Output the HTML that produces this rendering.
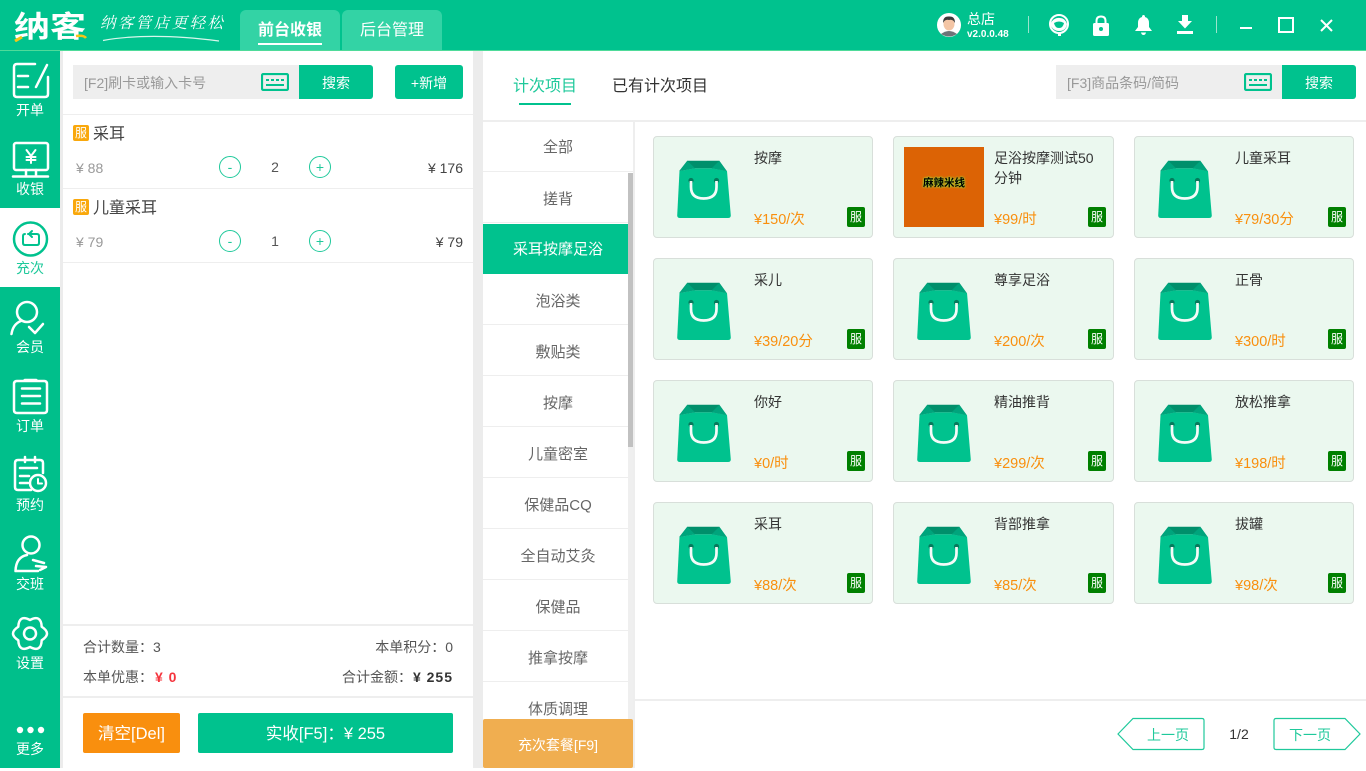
<!DOCTYPE html>
<html lang="zh"><head><meta charset="utf-8"><title>纳客</title>
<style>
*{box-sizing:border-box}
html,body{margin:0;padding:0;width:1366px;height:768px;overflow:hidden;background:#fff;font-family:"Liberation Sans","Noto Sans CJK SC",sans-serif;color:#333}
.a{position:absolute}
.t{position:absolute;white-space:nowrap;line-height:20px;font-size:14px}
.c{text-align:center}
.g{background:#00c28e}
.lab{position:absolute;left:0;width:60px;text-align:center;color:#fff;font-size:14px;line-height:18px}
.cat{position:absolute;left:483px;width:150px;height:50px;line-height:54px;text-align:center;font-size:15px;color:#666;border-bottom:1px solid #eee}
.card{position:absolute;width:220px;height:102px;background:#ebf8ef;border:1px solid #d8dfda;border-radius:4px}
.card svg{position:absolute;left:23px;top:23px}
.card .n{position:absolute;left:100px;top:11px;width:105px;font-size:14px;line-height:20px;color:#333}
.card .p{position:absolute;left:100px;top:73px;font-size:14.500px;line-height:21px;color:#f98f0e;white-space:nowrap}
.card .b{position:absolute;left:193px;top:70px;width:18px;height:20px;background:#008000;color:#fff;font-size:12px;line-height:20px;text-align:center;border-radius:2px}
.fu{position:absolute;left:73px;width:16px;height:16px;background:#f9a80c;border-radius:2px;color:#fff;font-size:12px;line-height:16px;text-align:center}
.rd{position:absolute;width:22px;height:22px;border:1px solid #1fc99b;border-radius:50%;color:#1fc99b;font-size:14px;line-height:21px;text-align:center}
</style></head><body>
<svg width="0" height="0" style="position:absolute"><defs>
<symbol id="bag" viewBox="0 0 54 58"><path d="M2.500 11 L18 8.300 H34.700 L50 11 L53.800 55.500 Q53.800 58 51 58 H3 Q0.200 58 0.200 55.500 Z" fill="#00c28e"/><path d="M10.300 0.700 H42.300 L49.700 11 L34.700 8.300 H18 L2.300 11 Z" fill="#008f6b"/><path d="M10.300 0.700 L18 8.300 L2.300 11 Z M42.300 0.700 L34.700 8.300 L49.700 11 Z" fill="#00a47c"/><circle cx="14" cy="20.500" r="2.600" fill="#057a5c"/><circle cx="39.500" cy="20.500" r="2.600" fill="#057a5c"/><path d="M14 21 V27 Q14 38.500 26.700 38.500 Q39.500 38.500 39.500 27 V21" fill="none" stroke="#f4fbf8" stroke-width="2.700"/></symbol>
<symbol id="kb" viewBox="0 0 28 18"><rect x="1" y="1" width="26" height="16" rx="1.500" fill="none" stroke="#00c28e" stroke-width="2.200"/><path d="M5 7H8M10 7H13M15 7H18M20 7H23M5 12H23" stroke="#00c28e" stroke-width="2" fill="none"/></symbol>
</defs></svg>

<!-- header -->
<div class="a g" style="left:0;top:0;width:1366px;height:50px"></div>
<div class="a" style="left:0;top:50px;width:1366px;height:1px;background:#4fdb9a"></div>
<div class="t" style="left:14px;top:9px;font-size:36px;line-height:36px;font-weight:700;color:#fff;letter-spacing:0;transform:scaleY(.82);transform-origin:50% 50%">纳客</div>
<svg class="a" style="left:14px;top:34px" width="74" height="8"><path d="M1 7 L8 3" stroke="#f5c518" stroke-width="3"/><path d="M62 2 Q70 1 72 4" stroke="#f5c518" stroke-width="2.500" fill="none"/></svg>
<div class="t" style="left:100px;top:14px;font-family:'Liberation Serif','Noto Serif CJK SC',serif;font-style:italic;font-size:15.500px;line-height:20px;color:#fff;letter-spacing:2.400px">纳客管店更轻松</div>
<svg class="a" style="left:100px;top:33px" width="125" height="10"><path d="M3 7.500 Q50 -1 119 8" fill="none" stroke="#d8f7ec" stroke-width="1.200"/></svg>
<div class="a" style="left:240px;top:10px;width:100px;height:40px;background:#33d3a5;border-radius:6px 6px 0 0"></div>
<div class="a" style="left:342px;top:10px;width:100px;height:40px;background:#33d3a5;border-radius:6px 6px 0 0"></div>
<div class="t c" style="left:240px;top:21px;width:100px;font-size:16px;font-weight:700;color:#fff">前台收银</div>
<div class="a" style="left:258px;top:43px;width:64px;height:2px;background:#fff"></div>
<div class="t c" style="left:342px;top:21px;width:100px;font-size:16px;color:#fff">后台管理</div>

<svg class="a" style="left:937px;top:13px" width="24" height="24" viewBox="0 0 24 24"><circle cx="12" cy="12" r="12" fill="#fff"/><path d="M4 21 Q12 15 20 21 Q12 26 4 21Z" fill="#6d7378"/><ellipse cx="12" cy="11" rx="5.500" ry="6.500" fill="#f3c5a5"/><path d="M6 10 Q6 3 12 3.500 Q18 3 18 10 Q16 6 12 7 Q8 6 6 10Z" fill="#3b3b3b"/></svg>
<div class="t" style="left:967px;top:9px;font-size:14px;color:#fff">总店</div>
<div class="t" style="left:967px;top:25px;font-size:10px;font-weight:700;color:#fff">v2.0.0.48</div>
<div class="a" style="left:1028px;top:16px;width:1px;height:17px;background:#9be4cd"></div>
<div class="a" style="left:1216px;top:16px;width:1px;height:17px;background:#9be4cd"></div>
<svg class="a" style="left:1048px;top:13px" width="22" height="26" viewBox="0 0 22 26"><circle cx="11" cy="11" r="9" fill="none" stroke="#fff" stroke-width="2"/><path d="M2 11 Q6 4 12 5 Q17 5 19 11 Q18 18 11 18 Q5 18 2 11Z" fill="#fff"/><path d="M6 10 Q11 7 16 10 Q15 15 11 15 Q7 15 6 10Z" fill="#00c28e"/><path d="M10 20 h3 v3 h-3z" fill="#fff"/></svg>
<svg class="a" style="left:1093px;top:15px" width="16" height="21" viewBox="0 0 16 21"><path d="M3.500 9 V6 Q3.500 1.500 8 1.500 Q12.500 1.500 12.500 6 V9" fill="none" stroke="#fff" stroke-width="2"/><rect y="8" width="16" height="13" rx="1.500" fill="#fff"/><circle cx="8" cy="14" r="2" fill="#00c28e"/></svg>
<svg class="a" style="left:1135px;top:15px" width="17" height="20" viewBox="0 0 17 20"><path d="M8.500 0 Q10 0 10 2 Q14 3 14 8 V12 L17 16 H0 L3 12 V8 Q3 3 7 2 Q7 0 8.500 0Z" fill="#fff"/><path d="M6 17.500 H11 Q10.500 20 8.500 20 Q6.500 20 6 17.500Z" fill="#fff"/></svg>
<svg class="a" style="left:1177px;top:15px" width="16" height="20" viewBox="0 0 16 20"><path d="M5 0 H11 V6 H15 L8 13.500 L1 6 H5Z" fill="#fff"/><rect y="16" width="16" height="3" fill="#fff"/></svg>
<div class="a" style="left:1240px;top:27px;width:12px;height:2px;background:#fff"></div>
<div class="a" style="left:1278px;top:17px;width:16px;height:16px;border:2px solid #fff"></div>
<svg class="a" style="left:1320px;top:19px" width="13" height="13"><path d="M1 1 L12 12 M12 1 L1 12" stroke="#fff" stroke-width="2"/></svg>

<!-- sidebar -->
<div class="a" style="left:0;top:51px;width:60px;height:717px;background:#00bf8b"></div>
<div class="a" style="left:60px;top:51px;width:3px;height:717px;background:#ececec"></div>
<div class="a" style="left:0;top:208px;width:60px;height:79px;background:#fff"></div>
<svg class="a" style="left:0;top:0" width="60" height="768" fill="none" stroke="#fff" stroke-width="2.500" stroke-linecap="round" stroke-linejoin="round">
<path d="M35 64 H17 Q14 64 14 67 V94 Q14 97 17 97 H45 Q48 97 48 94 V77 M18 76 H28 M18 87 H28 M47 65 L36 87"/>
<rect x="14" y="143" width="34" height="27" rx="2"/><path d="M13 176.500 H48 M26 170 V176 M36 170 V176"/>
<path d="M26.500 150 L31 156 L35.500 150 M31 156 V163 M26.500 157 H35.500 M26.500 160 H35.500" stroke-width="2"/>
<circle cx="30.500" cy="239" r="16.500" stroke="#00c28e"/><path d="M28 234 H37 Q39 234 39 236 V243 Q39 245 37 245 H25 Q23 245 23 243 V236 Q23 234 25 234 M32 231 L29 234 L32 237" stroke="#00c28e" stroke-width="2"/>
<circle cx="27" cy="312" r="10"/><path d="M11.500 334 Q13 324 21 321 M29 327 L35 333 L43 324"/>
<path d="M24 381 H17 Q14 381 14 384 V410 Q14 413 17 413 H44 Q47 413 47 410 V384 Q47 381 44 381 H37"/><path d="M25 380.500 H36" stroke-width="3.500"/><path d="M22 388.500 H40 M22 396 H40 M22 403.500 H40"/>
<path d="M31 490 H18 Q15 490 15 487 V463 Q15 460 18 460 H40 Q43 460 43 463 V473 M25 457 V462 M35 457 V462 M20 468 H37 M20 476 H29 M20 483 H28"/><circle cx="38" cy="483" r="8"/><path d="M38 479 V483.500 H42" stroke-width="2"/>
<circle cx="31" cy="545" r="8.500"/><path d="M15.500 571 Q16 557 27 555 M15.500 571 H38 M33 560 L44 563 M36 566 L46 567 L40 570"/>
<path d="M30 620 Q41.150 614.200 41.700 626.750 Q52.300 633.500 41.700 640.250 Q41.150 652.800 30 647 Q18.850 652.800 18.300 640.250 Q7.700 633.500 18.300 626.750 Q18.850 614.200 30 620Z"/><circle cx="30" cy="633.500" r="6"/>
<circle cx="20" cy="730" r="3.200" fill="#fff" stroke="none"/><circle cx="30.500" cy="730" r="3.200" fill="#fff" stroke="none"/><circle cx="41" cy="730" r="3.200" fill="#fff" stroke="none"/>
</svg>
<div class="lab" style="top:101px">开单</div>
<div class="lab" style="top:180px">收银</div>
<div class="lab" style="top:259px;color:#1fc99b">充次</div>
<div class="lab" style="top:338px">会员</div>
<div class="lab" style="top:417px">订单</div>
<div class="lab" style="top:496px">预约</div>
<div class="lab" style="top:575px">交班</div>
<div class="lab" style="top:654px">设置</div>
<div class="lab" style="top:740px">更多</div>

<!-- left panel -->
<div class="a" style="left:73px;top:65px;width:226px;height:34px;background:#eee"></div>
<div class="t" style="left:84px;top:73px;font-size:14px;color:#999">[F2]刷卡或输入卡号</div>
<svg class="a" style="left:261px;top:73px" width="28" height="18"><use href="#kb"/></svg>
<div class="a g c" style="left:299px;top:65px;width:74px;height:34px;line-height:37px;color:#fff;font-size:14px;border-radius:0 3px 3px 0">搜索</div>
<div class="a g c" style="left:395px;top:65px;width:68px;height:34px;line-height:37px;color:#fff;font-size:14px;border-radius:3px">+新增</div>
<div class="a" style="left:63px;top:114px;width:410px;height:1px;background:#eee"></div>
<div class="a" style="left:63px;top:188px;width:410px;height:1px;background:#eee"></div>
<div class="a" style="left:63px;top:262px;width:410px;height:1px;background:#eee"></div>
<div class="fu" style="top:125px">服</div>
<div class="t" style="left:93px;top:125px;font-size:16px;color:#444">采耳</div>
<div class="t" style="left:76px;top:158px;color:#999">¥ 88</div>
<div class="rd" style="left:219px;top:156px">-</div>
<div class="t c" style="left:265px;top:157px;width:20px;color:#555">2</div>
<div class="rd" style="left:309px;top:156px">+</div>
<div class="t" style="right:903px;top:158px;color:#444">¥ 176</div>
<div class="fu" style="top:199px">服</div>
<div class="t" style="left:93px;top:199px;font-size:16px;color:#444">儿童采耳</div>
<div class="t" style="left:76px;top:232px;color:#999">¥ 79</div>
<div class="rd" style="left:219px;top:230px">-</div>
<div class="t c" style="left:265px;top:231px;width:20px;color:#555">1</div>
<div class="rd" style="left:309px;top:230px">+</div>
<div class="t" style="right:903px;top:232px;color:#444">¥ 79</div>

<div class="a" style="left:63px;top:624px;width:410px;height:2px;background:#eee"></div>
<div class="a" style="left:63px;top:696px;width:410px;height:2px;background:#eee"></div>
<div class="t" style="left:83px;top:637px;font-size:14px;color:#555">合计数量：3</div>
<div class="t" style="right:913px;top:637px;font-size:14px;color:#555">本单积分：0</div>
<div class="t" style="left:83px;top:667px;font-size:14px;color:#555">本单优惠：</div>
<div class="t" style="left:155px;top:667px;font-size:14px;font-weight:700;color:#f5343d;letter-spacing:1px">¥ 0</div>
<div class="t" style="left:342px;top:667px;font-size:14px;color:#555">合计金额：</div>
<div class="t" style="right:913px;top:667px;font-size:14px;font-weight:700;color:#333;letter-spacing:1px">¥ 255</div>
<div class="a c" style="left:83px;top:713px;width:97px;height:40px;line-height:42px;background:#f98f0e;color:#fff;font-size:16.500px;border-radius:2px">清空[Del]</div>
<div class="a g c" style="left:198px;top:713px;width:255px;height:40px;line-height:42px;color:#fff;font-size:16.500px;border-radius:2px">实收[F5]：¥ 255</div>

<!-- divider -->
<div class="a" style="left:473px;top:51px;width:10px;height:717px;background:#ececec"></div>

<!-- top tabs -->
<div class="t" style="left:513px;top:77px;font-size:16px;color:#1fc99b">计次项目</div>
<div class="a" style="left:519px;top:103px;width:52px;height:2px;background:#00c28e"></div>
<div class="t" style="left:612px;top:77px;font-size:16px;color:#333">已有计次项目</div>
<div class="a" style="left:1056px;top:65px;width:226px;height:34px;background:#eee"></div>
<div class="t" style="left:1067px;top:73px;font-size:14px;color:#999">[F3]商品条码/简码</div>
<svg class="a" style="left:1244px;top:73px" width="28" height="18"><use href="#kb"/></svg>
<div class="a g c" style="left:1282px;top:65px;width:74px;height:34px;line-height:37px;color:#fff;font-size:14px;border-radius:0 3px 3px 0">搜索</div>
<div class="a" style="left:483px;top:120px;width:883px;height:2px;background:#eee"></div>

<!-- categories -->
<div class="cat" style="top:122px;line-height:52px">全部</div>
<div class="cat" style="top:173px">搓背</div>
<div class="cat" style="top:224px;background:#00c28e;color:#fff;border:0;line-height:52px">采耳按摩足浴</div>
<div class="cat" style="top:275px">泡浴类</div>
<div class="cat" style="top:326px">敷贴类</div>
<div class="cat" style="top:377px">按摩</div>
<div class="cat" style="top:428px">儿童密室</div>
<div class="cat" style="top:479px">保健品CQ</div>
<div class="cat" style="top:530px">全自动艾灸</div>
<div class="cat" style="top:581px">保健品</div>
<div class="cat" style="top:632px">推拿按摩</div>
<div class="cat" style="top:683px">体质调理</div>
<div class="a" style="left:628px;top:173px;width:5px;height:595px;background:#efefef"></div>
<div class="a" style="left:628px;top:173px;width:5px;height:274px;background:#c1c1c1"></div>
<div class="a" style="left:633px;top:122px;width:2px;height:646px;background:#eee"></div>
<div class="a c" style="left:483px;top:719px;width:150px;height:49px;line-height:52px;background:#f0ae50;color:#fff;font-size:14px;border-radius:2px">充次套餐[F9]</div>

<!-- cards -->
<div class="card" style="left:653px;top:136px"><svg width="54" height="58"><use href="#bag"/></svg><div class="n">按摩</div><div class="p">¥150/次</div><div class="b">服</div></div>
<div class="card" style="left:893px;top:136px;width:221px"><div class="a c" style="left:10px;top:10px;width:80px;height:80px;background:#dc6305;line-height:72px;font-size:10.500px;font-weight:700;color:#000;text-shadow:0 0 2px #9be03a,0 0 2px #9be03a">麻辣米线</div><div class="n">足浴按摩测试50 分钟</div><div class="p">¥99/时</div><div class="b" style="left:194px">服</div></div>
<div class="card" style="left:1134px;top:136px"><svg width="54" height="58"><use href="#bag"/></svg><div class="n">儿童采耳</div><div class="p">¥79/30分</div><div class="b">服</div></div>

<div class="card" style="left:653px;top:258px"><svg width="54" height="58"><use href="#bag"/></svg><div class="n">采儿</div><div class="p">¥39/20分</div><div class="b">服</div></div>
<div class="card" style="left:893px;top:258px;width:221px"><svg width="54" height="58"><use href="#bag"/></svg><div class="n">尊享足浴</div><div class="p">¥200/次</div><div class="b" style="left:194px">服</div></div>
<div class="card" style="left:1134px;top:258px"><svg width="54" height="58"><use href="#bag"/></svg><div class="n">正骨</div><div class="p">¥300/时</div><div class="b">服</div></div>

<div class="card" style="left:653px;top:380px"><svg width="54" height="58"><use href="#bag"/></svg><div class="n">你好</div><div class="p">¥0/时</div><div class="b">服</div></div>
<div class="card" style="left:893px;top:380px;width:221px"><svg width="54" height="58"><use href="#bag"/></svg><div class="n">精油推背</div><div class="p">¥299/次</div><div class="b" style="left:194px">服</div></div>
<div class="card" style="left:1134px;top:380px"><svg width="54" height="58"><use href="#bag"/></svg><div class="n">放松推拿</div><div class="p">¥198/时</div><div class="b">服</div></div>

<div class="card" style="left:653px;top:502px"><svg width="54" height="58"><use href="#bag"/></svg><div class="n">采耳</div><div class="p">¥88/次</div><div class="b">服</div></div>
<div class="card" style="left:893px;top:502px;width:221px"><svg width="54" height="58"><use href="#bag"/></svg><div class="n">背部推拿</div><div class="p">¥85/次</div><div class="b" style="left:194px">服</div></div>
<div class="card" style="left:1134px;top:502px"><svg width="54" height="58"><use href="#bag"/></svg><div class="n">拔罐</div><div class="p">¥98/次</div><div class="b">服</div></div>

<!-- pagination -->
<div class="a" style="left:635px;top:699px;width:731px;height:2px;background:#eee"></div>
<svg class="a" style="left:1115px;top:716px" width="250" height="36" fill="none" stroke="#1fc99b" stroke-width="1.200"><path d="M3 18 L18 2.500 H87 Q89 2.500 89 4.500 V31.500 Q89 33.500 87 33.500 H18 Z"/><path d="M161 2.500 H230 L245 18 L230 33.500 H161 Q159 33.500 159 31.500 V4.500 Q159 2.500 161 2.500Z"/></svg>
<div class="t" style="left:1147px;top:725px;font-size:14px;color:#1fc99b">上一页</div>
<div class="t c" style="left:1219px;top:724px;width:40px;font-size:14px;color:#333">1/2</div>
<div class="t" style="left:1289px;top:725px;font-size:14px;color:#1fc99b">下一页</div>
</body></html>
